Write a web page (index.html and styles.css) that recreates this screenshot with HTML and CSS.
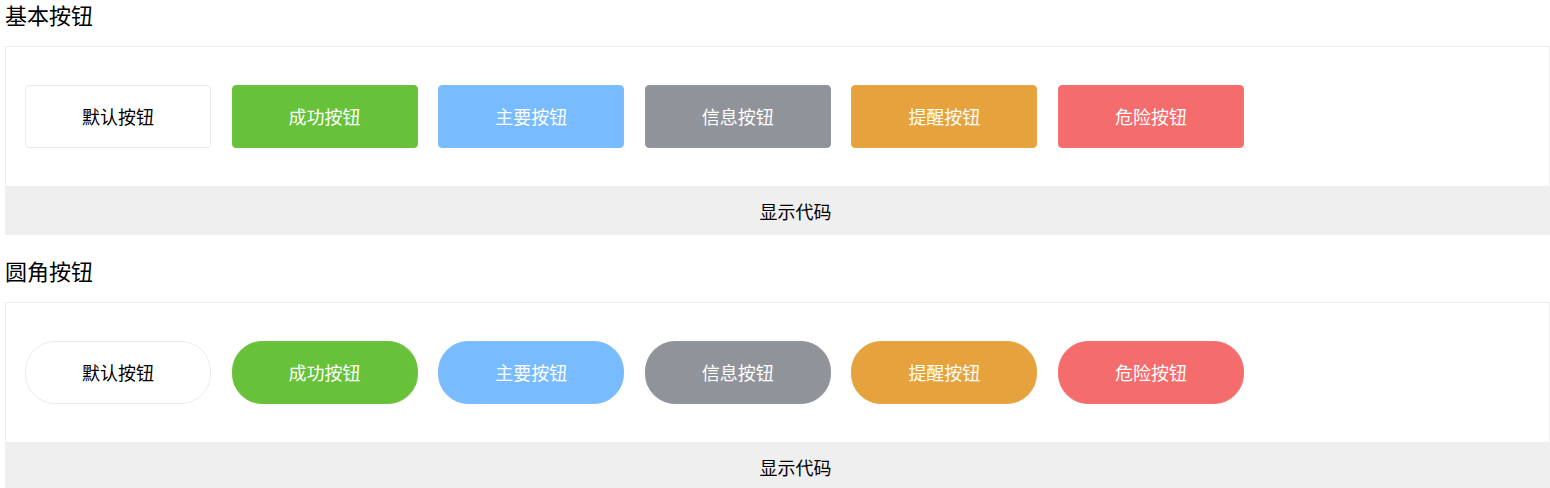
FILE: index.html
```html
<!DOCTYPE html>
<html lang="zh-CN">
<head>
<meta charset="utf-8">
<title>按钮</title>
<link rel="stylesheet" href="styles.css">
</head>
<body>
<section class="demo-section">
  <h3 class="demo-title">基本按钮</h3>
  <div class="demo-card">
    <div class="demo-body">
      <button class="btn btn-default">默认按钮</button>
      <button class="btn btn-success">成功按钮</button>
      <button class="btn btn-primary">主要按钮</button>
      <button class="btn btn-info">信息按钮</button>
      <button class="btn btn-warning">提醒按钮</button>
      <button class="btn btn-danger">危险按钮</button>
    </div>
    <div class="demo-code">显示代码</div>
  </div>
</section>
<section class="demo-section">
  <h3 class="demo-title">圆角按钮</h3>
  <div class="demo-card">
    <div class="demo-body">
      <button class="btn btn-round btn-default">默认按钮</button>
      <button class="btn btn-round btn-success">成功按钮</button>
      <button class="btn btn-round btn-primary">主要按钮</button>
      <button class="btn btn-round btn-info">信息按钮</button>
      <button class="btn btn-round btn-warning">提醒按钮</button>
      <button class="btn btn-round btn-danger">危险按钮</button>
    </div>
    <div class="demo-code">显示代码</div>
  </div>
</section>
</body>
</html>
```
FILE: styles.css
```css
html, body {
  margin: 0;
  padding: 0;
  background: #fff;
}
body {
  padding-left: 5px;
  font-family: "Noto Sans CJK SC", "Noto Sans", sans-serif;
  color: #000;
}
.demo-section {
  margin-bottom: 21px;
}
.demo-title {
  margin: 0 0 18px;
  font-size: 22px;
  line-height: 28px;
  font-weight: normal;
  color: #000;
}
.demo-card {
  display: flex;
  flex-direction: column;
}
.demo-body {
  display: flex;
  gap: 20.6px;
  padding: 38px 19px;
  border: 1px solid #eee;
}
.btn {
  width: 186px;
  height: 63px;
  box-sizing: border-box;
  border: 1px solid #eee;
  border-radius: 4px;
  font-family: inherit;
  font-size: 18px;
  color: #fff;
  background: #fff;
  padding: 0 0 2px;
  cursor: pointer;
}
.btn-round {
  border-radius: 30px;
}
.btn-default {
  color: #000;
  background: #fff;
  border-color: #ebebeb;
}
.btn-success {
  background: #67c23a;
  border-color: #6cc340;
}
.btn-primary {
  background: #79bbff;
  border-color: #7fbefe;
}
.btn-info {
  background: #909399;
  border-color: #95989e;
}
.btn-warning {
  background: #e6a23c;
  border-color: #e8a645;
}
.btn-danger {
  background: #f56c6c;
  border-color: #f47474;
}
.demo-code {
  height: 48px;
  line-height: 48px;
  padding-left: 36px;
  background: #efefef;
  text-align: center;
  font-size: 18px;
  color: #000;
}
```
